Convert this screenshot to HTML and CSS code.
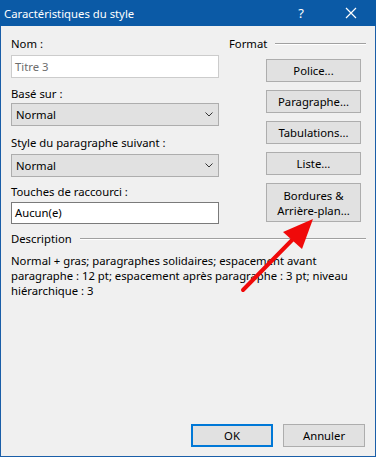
FILE: index.html
```html
<!DOCTYPE html>
<html lang="fr">
<head>
  <meta charset="UTF-8" />
  <title>Caractéristiques du style</title>
  <link rel="stylesheet" href="styles.css">
</head>
<body>
  <div class="window">
    <!-- Title bar -->
    <div class="titlebar">
      <span class="title">Caractéristiques du style</span>
      <span class="help">?</span>
      <svg class="close" width="12" height="12" viewBox="0 0 12 12">
        <path d="M1 1 L11 11 M11 1 L1 11" stroke="#fff" stroke-width="1.2" fill="none" />
      </svg>
    </div>

    <div class="main">
      <div class="left">
        <label class="lbl lbl-nom">Nom :</label>
        <div class="field field-disabled">Titre 3</div>

        <label class="lbl lbl-base">Basé sur :</label>
        <div class="select select-base">
          <span>Normal</span>
          <svg width="8" height="5" viewBox="0 0 8 5"><polyline points="0.5,0.5 4,4 7.5,0.5" stroke="#333" fill="none" /></svg>
        </div>

        <label class="lbl lbl-suivant">Style du paragraphe suivant :</label>
        <div class="select select-suivant">
          <span>Normal</span>
          <svg width="8" height="5" viewBox="0 0 8 5"><polyline points="0.5,0.5 4,4 7.5,0.5" stroke="#333" fill="none" /></svg>
        </div>

        <label class="lbl lbl-touches">Touches de raccourci :</label>
        <div class="field field-touches">Aucun(e)</div>
      </div>

      <div class="right">
        <div class="group-head">
          <span>Format</span>
          <div class="rule"></div>
        </div>
        <div class="format-btns">
          <button class="btn">Police...</button>
          <button class="btn">Paragraphe...</button>
          <button class="btn">Tabulations...</button>
          <button class="btn">Liste...</button>
          <button class="btn btn-tall">Bordures &amp;<br>Arrière-plan...</button>
        </div>
      </div>
    </div>

    <div class="description">
      <div class="group-head">
        <span>Description</span>
        <div class="rule"></div>
      </div>
      <p class="desc-text">Normal + gras; paragraphes solidaires; espacement avant paragraphe : 12 pt; espacement après paragraphe : 3 pt; niveau hiérarchique : 3</p>
    </div>

    <div class="footer">
      <button class="btn btn-foot btn-ok">OK</button>
      <button class="btn btn-foot">Annuler</button>
    </div>

    <!-- red annotation arrow -->
    <svg class="arrow" width="376" height="457" viewBox="0 0 376 457">
      <line x1="243" y1="290" x2="296" y2="236" stroke="#f00a0a" stroke-width="4" stroke-linecap="round" />
      <polygon points="313,219 283,232 302,249" fill="#f00a0a" />
    </svg>
  </div>
</body>
</html>
```

FILE: styles.css
```css
* {
  box-sizing: border-box;
  margin: 0;
  padding: 0;
}

body {
  background: #f0f0f0;
  font-family: 'Noto Sans', sans-serif;
  font-size: 11.3px;
  color: #000;
}

.window {
  position: relative;
  width: 376px;
  height: 457px;
  background: #f0f0f0;
  border: 1px solid #1a5ea8;
  border-top: none;
  display: flex;
  flex-direction: column;
}

.titlebar {
  height: 26px;
  background: #0b5aa6;
  color: #fff;
  display: flex;
  align-items: center;
  padding-left: 4px;
  margin: 0 -1px;
}

.title {
  flex: 1;
  line-height: 15px;
  padding-top: 1px;
}

.help {
  width: 14px;
  margin-right: 37px;
  text-align: center;
  font-size: 13px;
}

.close {
  margin-right: 19px;
}

.main {
  display: flex;
  padding: 10px 9px 0 10px;
  gap: 10px;
}

.left {
  width: 208px;
  display: flex;
  flex-direction: column;
}

.lbl {
  display: block;
  line-height: 15px;
}

.lbl-base { margin-top: 8px; }
.lbl-suivant { margin-top: 9px; }
.lbl-touches { margin-top: 7px; }

.field {
  height: 23px;
  background: #fff;
  border: 1px solid #7a7a7a;
  padding: 0 3px;
  line-height: 21px;
  margin-top: 4px;
}

.field-disabled {
  border-color: #cccccc;
  color: #6d6d6d;
}

.field-touches {
  height: 22px;
  line-height: 20px;
  margin-top: 3px;
}

.select {
  height: 23px;
  background: #e1e1e1;
  border: 1px solid #adadad;
  display: flex;
  align-items: center;
  justify-content: space-between;
  padding: 0 5px 0 4px;
  margin-top: 2px;
}

.select-suivant {
  margin-top: 4px;
}

.right {
  flex: 1;
  display: flex;
  flex-direction: column;
}

.group-head {
  display: flex;
  align-items: center;
  gap: 8px;
  line-height: 15px;
}

.rule {
  flex: 1;
  height: 2px;
  border-top: 1px solid #a0a0a0;
  border-bottom: 1px solid #fff;
}

.format-btns {
  display: flex;
  flex-direction: column;
  align-items: flex-end;
  gap: 8px;
  margin-top: 8px;
  padding-right: 5px;
}

.btn {
  width: 95px;
  height: 23px;
  background: #e1e1e1;
  border: 1px solid #adadad;
  font-family: inherit;
  font-size: inherit;
  color: #000;
  line-height: 15px;
}

.btn-tall {
  height: 39px;
}

.description {
  padding: 7px 9px 0 10px;
}

.desc-text {
  margin-top: 7px;
  line-height: 15px;
}

.footer {
  margin-top: auto;
  display: flex;
  justify-content: flex-end;
  gap: 10px;
  padding: 0 10px 9px 0;
}

.btn-foot {
  width: 82px;
}

.btn-ok {
  border: 2px solid #0078d7;
}

.arrow {
  position: absolute;
  left: -1px;
  top: 0;
  pointer-events: none;
}
```
